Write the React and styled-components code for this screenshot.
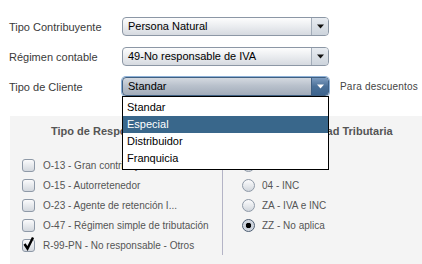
import React from 'react';
import styled, { createGlobalStyle, css } from 'styled-components';

const GlobalStyle = createGlobalStyle`
  body {
    margin: 0;
    background: #ffffff;
    font-family: "Liberation Sans", Arial, sans-serif;
  }
`;

const tipos = ['Standar', 'Especial', 'Distribuidor', 'Franquicia'];

const responsabilidades = [
  { code: 'O-13 - Gran contribuyente', checked: false },
  { code: 'O-15 - Autorretenedor', checked: false },
  { code: 'O-23 - Agente de retención I...', checked: false },
  { code: 'O-47 - Régimen simple de tributación', checked: false },
  { code: 'R-99-PN - No responsable - Otros', checked: true },
];

const tributos = [
  { code: '01 - IVA', selected: false },
  { code: '04 - INC', selected: false },
  { code: 'ZA - IVA e INC', selected: false },
  { code: 'ZZ - No aplica', selected: true },
];

const Arrow = ({ color }) => (
  <svg width="7" height="5" viewBox="0 0 7 5">
    <path d="M0 0.5 H7 L3.5 4.5 Z" fill={color} />
  </svg>
);

const Combo = ({ value, focused, children }) => (
  <ComboBox focused={focused}>
    <ComboText>{value}</ComboText>
    <ComboButton focused={focused}>
      <Arrow color={focused ? '#ffffff' : '#111111'} />
    </ComboButton>
    {children}
  </ComboBox>
);

const App = () => {
  return (
    <Page>
      <GlobalStyle />
      <Form>
        <Label>Tipo Contribuyente</Label>
        <Combo value="Persona Natural" />
        <span />

        <Label>Régimen contable</Label>
        <Combo value="49-No responsable de IVA" />
        <span />

        <Label>Tipo de Cliente</Label>
        <Combo value="Standar" focused>
          <Popup>
            {tipos.map((t) => (
              <PopupItem key={t} active={t === 'Especial'}>{t}</PopupItem>
            ))}
          </Popup>
        </Combo>
        <Note>Para descuentos</Note>
      </Form>

      <Panel>
        <Column>
          <Heading>Tipo de Responsabilidad</Heading>
          <List>
            {responsabilidades.map((r) => (
              <Option key={r.code}>
                <CheckBox>
                  {r.checked && (
                    <svg width="14" height="15" viewBox="0 0 14 15">
                      <path d="M2.5 8 L5.5 12.5 L11 1.5" fill="none" stroke="#000" strokeWidth="2.4" strokeLinejoin="miter" />
                    </svg>
                  )}
                </CheckBox>
                <OptionText>{r.code}</OptionText>
              </Option>
            ))}
          </List>
        </Column>
        <Column>
          <Heading>Responsabilidad Tributaria</Heading>
          <List divided>
            {tributos.map((t) => (
              <Option key={t.code} radio>
                <Radio selected={t.selected} />
                <OptionText>{t.code}</OptionText>
              </Option>
            ))}
          </List>
        </Column>
      </Panel>
    </Page>
  );
};

const Page = styled.div`
  width: 422px;
  height: 264px;
  overflow: hidden;
`;

const Form = styled.div`
  display: grid;
  grid-template-columns: 113px 207px auto;
  grid-auto-rows: 19px;
  row-gap: 11px;
  align-items: center;
  padding: 17px 0 0 9px;
`;

const Label = styled.span`
  font-size: 11px;
  color: #3a3a3a;
`;

const Note = styled.span`
  font-size: 10px;
  color: #444444;
  letter-spacing: 0.2px;
  margin-left: 11px;
`;

const ComboBox = styled.div`
  position: relative;
  display: flex;
  height: 19px;
  box-sizing: border-box;
  border: 1px solid #8c97a5;
  border-radius: 4px;
  background: linear-gradient(#fdfdfd, #eceef1 45%, #d6dae0);
  ${(p) =>
    p.focused &&
    css`
      border-color: #3f5f82;
      box-shadow: 0 0 0 1px #8fb2d8;
      background: linear-gradient(#d4d9e0, #b9c1cc 45%, #a2acba);
    `}
`;

const ComboText = styled.div`
  flex: 1;
  font-size: 11px;
  line-height: 17px;
  padding-left: 5px;
  color: #000000;
  white-space: nowrap;
  overflow: hidden;
`;

const ComboButton = styled.div`
  width: 16px;
  display: flex;
  align-items: center;
  justify-content: center;
  border-left: 1px solid #a3adb9;
  border-radius: 0 3px 3px 0;
  background: linear-gradient(#e8ecf1, #cdd4dc);
  ${(p) =>
    p.focused &&
    css`
      border-left-color: #3f5f82;
      background: linear-gradient(#7d9cc0, #4a7098 50%, #3d648e);
    `}
`;

const Popup = styled.div`
  position: absolute;
  top: 100%;
  left: -1px;
  right: -1px;
  margin-top: 1px;
  z-index: 5;
  background: #ffffff;
  border: 1px solid #000000;
  padding: 2px 0 2px;
`;

const PopupItem = styled.div`
  height: 17px;
  line-height: 17px;
  font-size: 11px;
  padding-left: 4px;
  color: #000000;
  ${(p) =>
    p.active &&
    css`
      background: #39678b;
      color: #ffffff;
    `}
`;

const Panel = styled.div`
  display: grid;
  grid-template-columns: 212px 1fr;
  margin: 20px 0 0 10px;
  height: 150px;
  background: #f4f4f4;
`;

const Column = styled.div`
  display: flex;
  flex-direction: column;
`;

const Heading = styled.div`
  font-size: 11px;
  font-weight: bold;
  color: #555555;
  text-align: center;
  line-height: 13px;
  padding-top: 9px;
  margin-bottom: 17px;
  white-space: nowrap;
`;

const List = styled.div`
  display: flex;
  flex-direction: column;
  height: 100px;
  padding-left: 12px;
  ${(p) =>
    p.divided &&
    css`
      border-left: 1px solid #b4b4c6;
      padding-left: 19px;
    `}
`;

const Option = styled.div`
  display: flex;
  align-items: center;
  height: 20px;
  gap: ${(p) => (p.radio ? '7px' : '8px')};
`;

const CheckBox = styled.div`
  position: relative;
  width: 13px;
  height: 13px;
  box-sizing: border-box;
  border: 1px solid #8e99a7;
  border-radius: 3px;
  background: linear-gradient(#fbfbfc, #e3e6ea 60%, #d4d8de);
  flex-shrink: 0;
  svg {
    position: absolute;
    left: -1px;
    top: -4px;
  }
`;

const Radio = styled.div`
  position: relative;
  width: 13px;
  height: 13px;
  box-sizing: border-box;
  border-radius: 50%;
  border: 1px solid #8e99a7;
  background: linear-gradient(#fbfbfc, #e3e6ea 60%, #d0d5dc);
  flex-shrink: 0;
  ${(p) =>
    p.selected &&
    css`
      border-color: #4c5d72;
      background: radial-gradient(circle, #000 0 2.5px, #c5ccd6 3px, #e6e9ee 100%);
    `}
`;

const OptionText = styled.span`
  font-size: 10px;
  color: #555555;
  white-space: nowrap;
`;

export default App;
